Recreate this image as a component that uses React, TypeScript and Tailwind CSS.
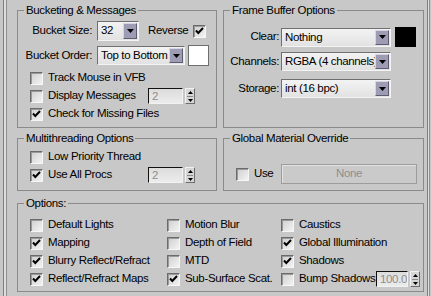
import React from "react";

function Check({ checked = false }: { checked?: boolean }) {
  return (
    <div className="w-[13px] h-[13px] shrink-0 border border-t-[#6b6b6b] border-l-[#6b6b6b] border-r-[#f6f6f6] border-b-[#f6f6f6] bg-gradient-to-br from-[#cfcfcf] to-[#f3f3f3] shadow-[inset_1px_1px_0_#9a9a9a] flex items-center justify-center">
      {checked && (
        <svg width="9" height="8" viewBox="0 0 9 8">
          <path d="M1 3.5 L3.3 6 L8 1" fill="none" stroke="#000" strokeWidth="2" />
        </svg>
      )}
    </div>
  );
}

function ArrowButton() {
  return (
    <div className="w-[14px] shrink-0 my-[1px] mr-[1px] bg-[#9d9cb4] border border-t-[#d6d5e6] border-l-[#d6d5e6] border-r-[#5d5c70] border-b-[#5d5c70] flex items-center justify-center">
      <svg width="7" height="4" viewBox="0 0 7 4">
        <path d="M0 0 H7 L3.5 4 Z" fill="#000" />
      </svg>
    </div>
  );
}

function Dropdown({ value, className }: { value: string; className: string }) {
  return (
    <div
      className={
        "flex shrink-0 border border-t-[#707070] border-l-[#707070] border-r-[#f4f4f4] border-b-[#f4f4f4] bg-gradient-to-b from-[#f3f3f3] to-[#e2e2e2] " +
        className
      }
    >
      <div className="flex-1 overflow-hidden whitespace-nowrap pl-[3px] leading-[17px]">{value}</div>
      <ArrowButton />
    </div>
  );
}

function Spinner({ value, field }: { value: string; field: string }) {
  return (
    <div className="flex shrink-0 h-[16px]">
      <div
        className={
          "h-full border border-t-[#111] border-l-[#111] border-r-[#f2f2f2] border-b-[#f2f2f2] bg-gradient-to-b from-[#dcdcdc] to-[#ececec] text-[#8d8d8d] pl-[3px] leading-[14px] overflow-hidden whitespace-nowrap " +
          field
        }
      >
        {value}
      </div>
      <div className="ml-[2px] w-[10px] h-full border border-t-[#f2f2f2] border-l-[#f2f2f2] border-r-[#6e6e6e] border-b-[#6e6e6e] bg-[#d6d6d6] flex flex-col items-center justify-center gap-[2px]">
        <svg width="5" height="3" viewBox="0 0 5 3">
          <path d="M0 3 H5 L2.5 0 Z" fill="#000" />
        </svg>
        <div className="w-[6px] h-[1px] bg-[#8a8a8a]" />
        <svg width="5" height="3" viewBox="0 0 5 3">
          <path d="M0 0 H5 L2.5 3 Z" fill="#000" />
        </svg>
      </div>
    </div>
  );
}

function Group({
  title,
  className,
  children,
}: {
  title: string;
  className: string;
  children?: React.ReactNode;
}) {
  return (
    <fieldset className={"border border-[#8a8a8a] shrink-0 " + className}>
      <legend className="ml-[6px] px-[2px] leading-[14px] whitespace-nowrap">{title}</legend>
      {children}
    </fieldset>
  );
}

function CheckRow({
  checked,
  label,
  labelW,
  children,
}: {
  checked?: boolean;
  label: string;
  labelW?: string;
  children?: React.ReactNode;
}) {
  return (
    <div className="flex items-center h-[18px]">
      <Check checked={checked} />
      <div className={"ml-[5px] whitespace-nowrap " + (labelW ?? "")}>{label}</div>
      {children}
    </div>
  );
}

export default function App() {
  return (
    <div className="w-[431px] h-[296px] bg-[#c8c8c8] flex overflow-hidden text-black text-[11.5px] tracking-[-0.35px] font-['Liberation_Sans',Arial,sans-serif]">
      <div className="w-[3px] shrink-0" />
      <div className="w-[1px] shrink-0 bg-[#7e7e7e]" />
      <div className="w-[2px] shrink-0 bg-[#dedede]" />
      <div className="w-[1px] shrink-0 bg-[#8e8e8e]" />

      <div className="w-[417px] shrink-0 pl-[10px] pt-[3px] flex flex-col">
        <div className="flex gap-[6px]">
          <Group title="Bucketing & Messages" className="w-[200px] h-[125px]">
            <div className="flex items-center h-[20px] mt-[4px]">
              <div className="w-[74px] text-right whitespace-nowrap">Bucket Size:</div>
              <Dropdown value="32" className="ml-[5px] w-[42px] h-[20px]" />
              <div className="ml-[9px] w-[45px] whitespace-nowrap">Reverse</div>
              <Check checked />
            </div>
            <div className="flex items-center h-[21px] mt-[4px]">
              <div className="w-[74px] text-right whitespace-nowrap">Bucket Order:</div>
              <Dropdown value="Top to Bottom" className="ml-[5px] w-[88px] h-[19px]" />
              <div className="ml-[3px] w-[21px] h-[21px] bg-white border border-[#6e6e6e]" />
            </div>
            <div className="mt-[3px] ml-[12px] flex flex-col">
              <CheckRow label="Track Mouse in VFB" />
              <CheckRow label="Display Messages" labelW="w-[100px]">
                <Spinner value="2" field="w-[35px]" />
              </CheckRow>
              <CheckRow checked label="Check for Missing Files" />
            </div>
          </Group>

          <Group title="Frame Buffer Options" className="w-[201px] h-[125px]">
            <div className="flex items-center h-[20px] mt-[10px]">
              <div className="w-[55px] text-right whitespace-nowrap">Clear:</div>
              <Dropdown value="Nothing" className="ml-[2px] w-[110px] h-[19px]" />
              <div className="ml-[4px] w-[21px] h-[20px] bg-black" />
            </div>
            <div className="flex items-center h-[19px] mt-[5px]">
              <div className="w-[55px] text-right whitespace-nowrap">Channels:</div>
              <Dropdown value="RGBA (4 channels)" className="ml-[2px] w-[110px] h-[19px]" />
            </div>
            <div className="flex items-center h-[19px] mt-[8px]">
              <div className="w-[55px] text-right whitespace-nowrap">Storage:</div>
              <Dropdown value="int (16 bpc)" className="ml-[2px] w-[110px] h-[19px]" />
            </div>
          </Group>
        </div>

        <div className="flex gap-[6px] mt-[3px]">
          <Group title="Multithreading Options" className="w-[200px] h-[60px]">
            <div className="mt-[3px] ml-[12px] flex flex-col">
              <CheckRow label="Low Priority Thread" />
              <CheckRow checked label="Use All Procs" labelW="w-[100px]">
                <Spinner value="2" field="w-[35px]" />
              </CheckRow>
            </div>
          </Group>

          <Group title="Global Material Override" className="w-[201px] h-[60px]">
            <div className="flex items-center h-[20px] mt-[19px] ml-[12px]">
              <Check />
              <div className="ml-[5px] w-[27px]">Use</div>
              <div className="w-[136px] h-[20px] border border-[#9c9c9c] bg-[#cacaca] shadow-[inset_1px_1px_0_#e2e2e2] text-[#8e8e8e] flex items-center justify-center">
                None
              </div>
            </div>
          </Group>
        </div>

        <Group title="Options:" className="w-[407px] h-[96px] mt-[5px]">
          <div className="mt-[6px] ml-[12px] flex">
            <div className="w-[137px] flex flex-col">
              <CheckRow label="Default Lights" />
              <CheckRow checked label="Mapping" />
              <CheckRow checked label="Blurry Reflect/Refract" />
              <CheckRow checked label="Reflect/Refract Maps" />
            </div>
            <div className="w-[114px] flex flex-col">
              <CheckRow label="Motion Blur" />
              <CheckRow label="Depth of Field" />
              <CheckRow label="MTD" />
              <CheckRow checked label="Sub-Surface Scat." />
            </div>
            <div className="flex flex-col">
              <CheckRow label="Caustics" />
              <CheckRow checked label="Global Illumination" />
              <CheckRow checked label="Shadows" />
              <CheckRow label="Bump Shadows" labelW="w-[77px]">
                <Spinner value="100.0" field="w-[32px]" />
              </CheckRow>
            </div>
          </div>
        </Group>
      </div>

      <div className="w-[3px] shrink-0" />
      <div className="w-[1px] shrink-0 bg-[#7e7e7e]" />
      <div className="w-[1px] shrink-0 bg-[#e0e0e0]" />
      <div className="w-[1px] shrink-0 bg-[#8e8e8e]" />
    </div>
  );
}
